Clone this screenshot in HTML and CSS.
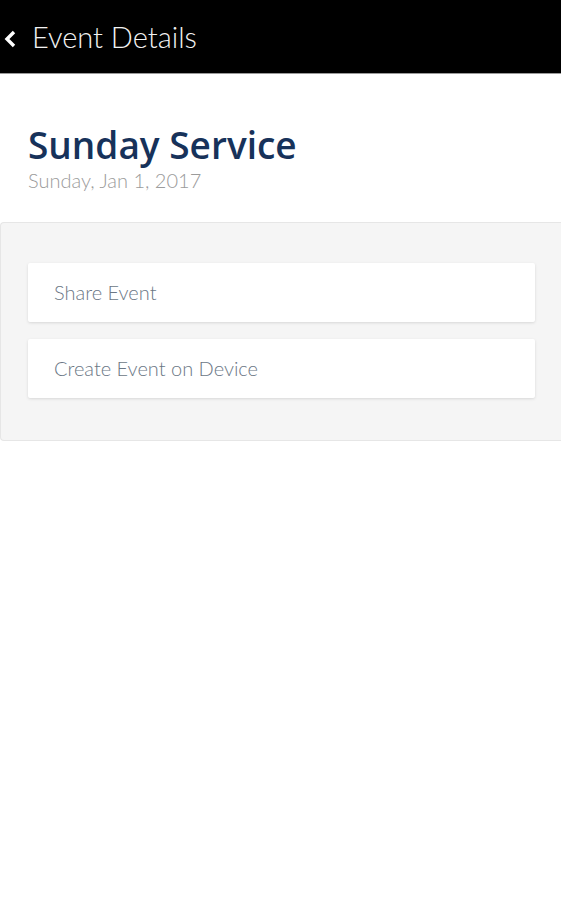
FILE: index.html
```html
<!DOCTYPE html>
<html lang="en">
<head>
    <meta charset="UTF-8">
    <meta name="viewport" content="width=device-width, initial-scale=1.0">
    <title>Event Details</title>
    <link rel="stylesheet" href="styles.css">
</head>
<body>

<header class="topbar">
    <button class="back-button" aria-label="Back">
        <svg width="13" height="18" viewBox="0 0 13 18">
            <path d="M10 2 L3 9 L10 16" fill="none" stroke="#fff" stroke-width="3.4" stroke-linejoin="miter"/>
        </svg>
    </button>
    <h1 class="topbar-title">Event Details</h1>
</header>

<section class="event-info">
    <h2 class="event-name">Sunday Service</h2>
    <p class="event-date">Sunday, Jan 1, 2017</p>
</section>

<section class="actions">
    <div class="action-card">Share Event</div>
    <div class="action-card">Create Event on Device</div>
</section>

</body>
</html>
```

FILE: styles.css
```css
body {
    margin: 0;
    font-family: Lato, "Open Sans", sans-serif;
    background-color: #fff;
}

.topbar {
    display: flex;
    align-items: center;
    height: 73px;
    background-color: #000;
    border-bottom: 1px solid #9a9a9a;
}

.back-button {
    display: flex;
    align-items: center;
    padding: 0 0 0 4px;
    margin-top: 4px;
    background: none;
    border: none;
    cursor: pointer;
}

.topbar-title {
    margin: 0 0 0 15px;
    color: #f2f2f2;
    font-size: 29px;
    font-weight: 300;
}

.event-info {
    padding: 48px 28px 30px;
}

.event-name {
    margin: 0;
    color: #17325a;
    font-family: "Open Sans", sans-serif;
    font-size: 37px;
    font-weight: 600;
    line-height: 46px;
}

.event-date {
    margin: 0;
    color: #9b9b9b;
    font-size: 20px;
    font-weight: 300;
    line-height: 24px;
}

.actions {
    display: flex;
    flex-direction: column;
    gap: 17px;
    padding: 40px 26px 42px 27px;
    background-color: #f5f5f5;
    border: 1px solid #e6e6e6;
    border-right: none;
    border-radius: 4px 0 0 4px;
}

.action-card {
    box-sizing: border-box;
    height: 59px;
    display: flex;
    align-items: center;
    padding: 0 0 2px 26px;
    background-color: #fff;
    border-radius: 2px;
    box-shadow: 0 1px 3px rgba(0, 0, 0, 0.12);
    color: #6b7785;
    font-size: 20px;
    font-weight: 300;
}
```
